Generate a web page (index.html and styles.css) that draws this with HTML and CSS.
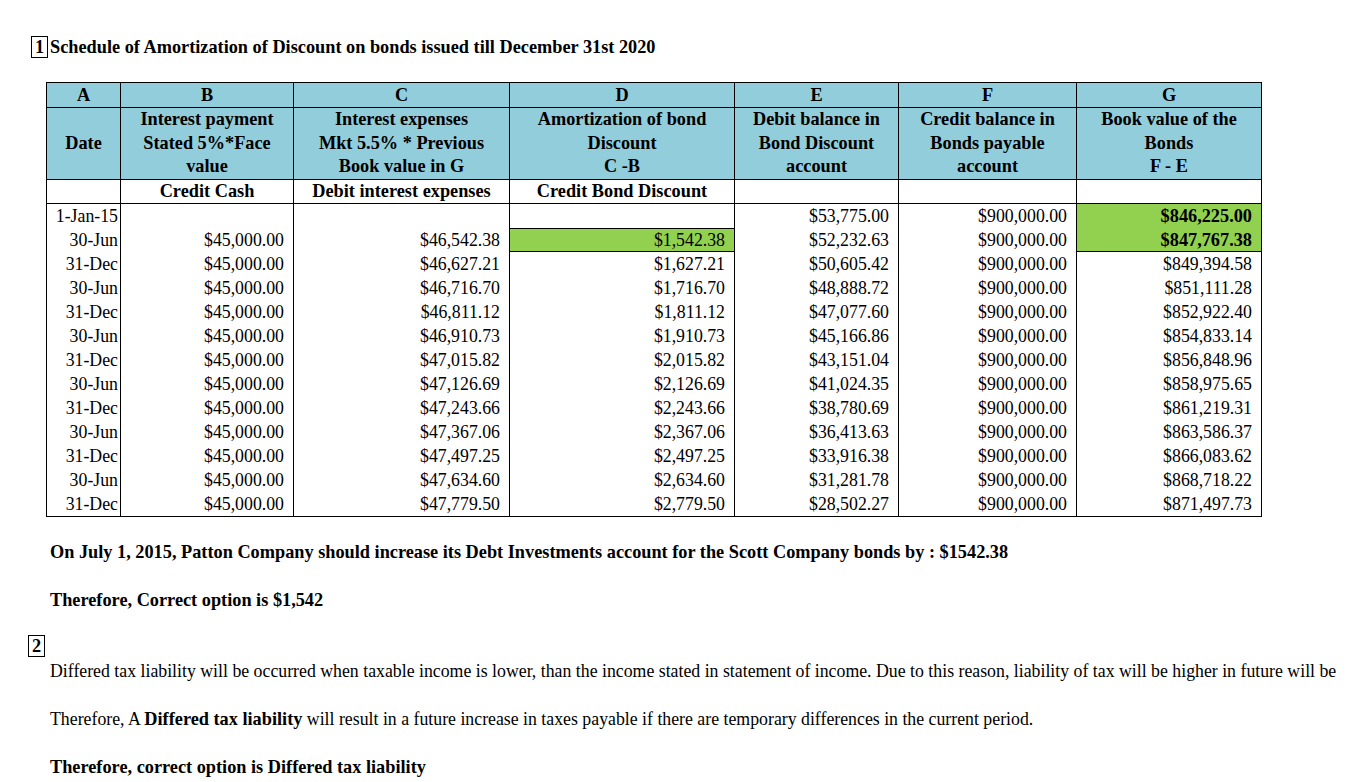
FILE: index.html
```html
<!DOCTYPE html>
<html>
<head>
<meta charset="utf-8">
<link rel="stylesheet" href="styles.css">
</head>
<body>
<div class="page">
  <div class="title-row"><span class="num-box">1</span><span class="title">Schedule of Amortization of Discount on bonds issued till December 31st 2020</span></div>
  <table class="sched">
    <colgroup>
      <col class="c-a"><col class="c-b"><col class="c-c"><col class="c-d"><col class="c-e"><col class="c-f"><col class="c-g">
    </colgroup>
    <thead>
      <tr class="h1"><th>A</th><th>B</th><th>C</th><th>D</th><th>E</th><th>F</th><th>G</th></tr>
      <tr class="h2"><th>Date</th><th>Interest payment<br>Stated 5%*Face<br>value</th><th>Interest expenses<br>Mkt 5.5% * Previous<br>Book value in G</th><th>Amortization of bond<br>Discount<br>C -B</th><th>Debit balance in<br>Bond Discount<br>account</th><th>Credit balance in<br>Bonds payable<br>account</th><th>Book value of the<br>Bonds<br>F - E</th></tr>
      <tr class="h3"><th></th><th>Credit Cash</th><th>Debit interest expenses</th><th>Credit Bond Discount</th><th></th><th></th><th></th></tr>
    </thead>
    <tbody>
      <tr><td class="d">1-Jan-15</td><td></td><td></td><td></td><td class="m">$53,775.00</td><td class="m">$900,000.00</td><td class="m hl b">$846,225.00</td></tr>
      <tr><td class="d">30-Jun</td><td class="m">$45,000.00</td><td class="m">$46,542.38</td><td class="m hl box">$1,542.38</td><td class="m">$52,232.63</td><td class="m">$900,000.00</td><td class="m hl b bot">$847,767.38</td></tr>
      <tr><td class="d">31-Dec</td><td class="m">$45,000.00</td><td class="m">$46,627.21</td><td class="m">$1,627.21</td><td class="m">$50,605.42</td><td class="m">$900,000.00</td><td class="m">$849,394.58</td></tr>
      <tr><td class="d">30-Jun</td><td class="m">$45,000.00</td><td class="m">$46,716.70</td><td class="m">$1,716.70</td><td class="m">$48,888.72</td><td class="m">$900,000.00</td><td class="m">$851,111.28</td></tr>
      <tr><td class="d">31-Dec</td><td class="m">$45,000.00</td><td class="m">$46,811.12</td><td class="m">$1,811.12</td><td class="m">$47,077.60</td><td class="m">$900,000.00</td><td class="m">$852,922.40</td></tr>
      <tr><td class="d">30-Jun</td><td class="m">$45,000.00</td><td class="m">$46,910.73</td><td class="m">$1,910.73</td><td class="m">$45,166.86</td><td class="m">$900,000.00</td><td class="m">$854,833.14</td></tr>
      <tr><td class="d">31-Dec</td><td class="m">$45,000.00</td><td class="m">$47,015.82</td><td class="m">$2,015.82</td><td class="m">$43,151.04</td><td class="m">$900,000.00</td><td class="m">$856,848.96</td></tr>
      <tr><td class="d">30-Jun</td><td class="m">$45,000.00</td><td class="m">$47,126.69</td><td class="m">$2,126.69</td><td class="m">$41,024.35</td><td class="m">$900,000.00</td><td class="m">$858,975.65</td></tr>
      <tr><td class="d">31-Dec</td><td class="m">$45,000.00</td><td class="m">$47,243.66</td><td class="m">$2,243.66</td><td class="m">$38,780.69</td><td class="m">$900,000.00</td><td class="m">$861,219.31</td></tr>
      <tr><td class="d">30-Jun</td><td class="m">$45,000.00</td><td class="m">$47,367.06</td><td class="m">$2,367.06</td><td class="m">$36,413.63</td><td class="m">$900,000.00</td><td class="m">$863,586.37</td></tr>
      <tr><td class="d">31-Dec</td><td class="m">$45,000.00</td><td class="m">$47,497.25</td><td class="m">$2,497.25</td><td class="m">$33,916.38</td><td class="m">$900,000.00</td><td class="m">$866,083.62</td></tr>
      <tr><td class="d">30-Jun</td><td class="m">$45,000.00</td><td class="m">$47,634.60</td><td class="m">$2,634.60</td><td class="m">$31,281.78</td><td class="m">$900,000.00</td><td class="m">$868,718.22</td></tr>
      <tr class="last"><td class="d">31-Dec</td><td class="m">$45,000.00</td><td class="m">$47,779.50</td><td class="m">$2,779.50</td><td class="m">$28,502.27</td><td class="m">$900,000.00</td><td class="m">$871,497.73</td></tr>
    </tbody>
  </table>
  <p class="para strong lead">On July 1, 2015, Patton Company should increase its Debt Investments account for the Scott Company bonds by : $1542.38</p>
  <p class="para strong">Therefore, Correct option is $1,542</p>
  <div class="num-row"><span class="num-box">2</span></div>
  <p class="para first">Differed tax liability will be occurred when taxable income is lower, than the income stated in statement of income. Due to this reason, liability of tax will be higher in future will be</p>
  <p class="para">Therefore, A <b>Differed tax liability</b> will result in a future increase in taxes payable if there are temporary differences in the current period.</p>
  <p class="para strong">Therefore, correct option is Differed tax liability</p>
</div>
</body>
</html>
```

FILE: styles.css
```css
html, body {
  margin: 0;
  padding: 0;
  background: #fff;
  overflow: hidden;
}
body {
  font-family: "Liberation Serif", "Times New Roman", serif;
  font-size: 17.8px;
  line-height: 24px;
  color: #000;
}
b, .strong, .title, .num-box, .sched th, .sched td.b {
  font-size: 18.3px;
}
.page {
  padding-top: 35px;
}
.title-row {
  display: flex;
  align-items: center;
  height: 24px;
  padding-left: 31px;
}
.num-box {
  display: inline-block;
  box-sizing: border-box;
  width: 17px;
  height: 22px;
  line-height: 20px;
  border: 1px solid #000;
  text-align: center;
  font-weight: bold;
}
.title {
  font-weight: bold;
  margin-left: 2px;
}
.sched {
  margin: 23px 0 0 46px;
  border-collapse: collapse;
  table-layout: fixed;
  width: 1215px;
}
.c-a { width: 74px; }
.c-b { width: 173px; }
.c-c { width: 216px; }
.c-d { width: 225px; }
.c-e { width: 164px; }
.c-f { width: 178px; }
.c-g { width: 185px; }
.sched th {
  border: 1px solid #000;
  padding: 0 2px;
  font-weight: bold;
  text-align: center;
  vertical-align: middle;
  line-height: 24px;
  white-space: nowrap;
}
.sched .h1 th, .sched .h2 th {
  background: #92cddc;
}
.sched .h1 th { height: 24px; }
.sched .h2 th { height: 71px; line-height: 23.7px; }
.sched .h3 th { background: #fff; height: 23px; line-height: 23px; }
.sched td {
  border-left: 1px solid #000;
  border-right: 1px solid #000;
  padding: 0;
  height: 24px;
  line-height: 24px;
  white-space: nowrap;
}
.sched .last td { border-bottom: 1px solid #000; }
.sched td.d { text-align: right; padding-right: 2px; }
.sched td.m { text-align: right; padding-right: 9px; }
.sched td.hl { background: #92d050; }
.sched td.b { font-weight: bold; }
.sched td.box { box-shadow: inset 0 1px 0 #000, inset 0 -1px 0 #000; }
.sched td.bot { box-shadow: inset 0 -1px 0 #000; }
.para {
  margin: 24px 0 0 0;
  padding-left: 50px;
  white-space: nowrap;
}
.para.lead { margin-top: 23px; }
.strong { font-weight: bold; }
.num-row {
  margin-top: 22px;
  padding-left: 28px;
  height: 24px;
  display: flex;
  align-items: center;
}
.para.first { margin-top: 1px; }
```
